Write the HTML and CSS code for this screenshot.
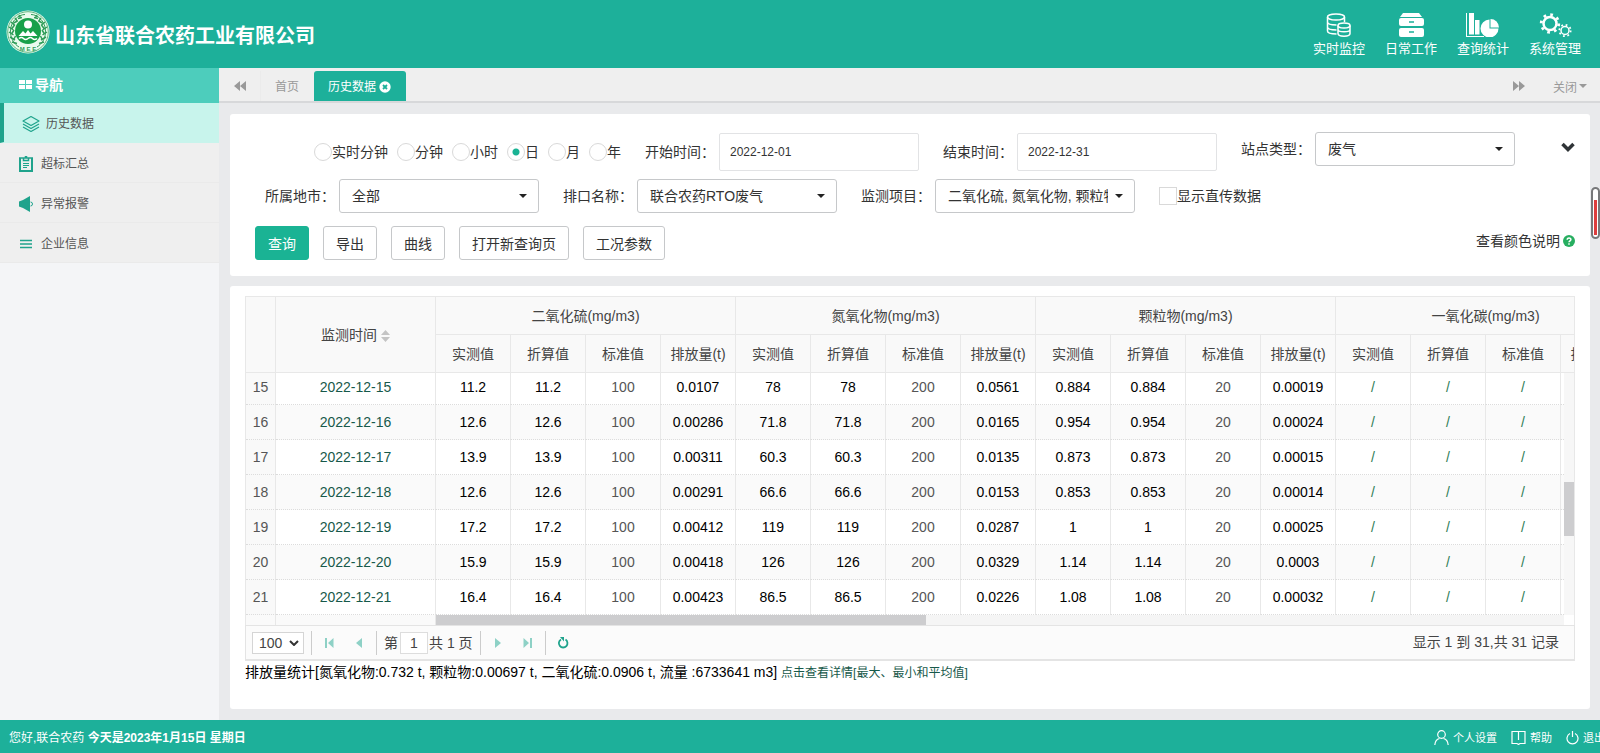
FILE: index.html
```html
<!DOCTYPE html>
<html lang="zh-CN">
<head>
    <meta charset="UTF-8">
    <meta name="viewport" content="width=device-width, initial-scale=1.0">
    <title>历史数据</title>
    <link rel="stylesheet" href="styles.css">
</head>
<body>
    <header class="header">
        <svg class="logo" viewBox="0 0 44 44">
            <circle cx="22" cy="22" r="21.5" fill="#e9fbee"/>
            <circle cx="22" cy="22" r="20.300" fill="none" stroke="#3fa566" stroke-width=".8"/>
            <path d="M13 37C3 31 2 17 9 9.500 12 6 16 4.500 19 4.500M31 37C41 31 42 17 35 9.500 32 6 28 4.500 25 4.500" fill="none" stroke="#2f9c58" stroke-width="1"/>
            <path d="M4 27l5 3M3 22l4.500 3M3 17l4.500 3M5 12l4 3.500M9 8l2.500 3.500M13 5l2 3.500M6 32l5 1.500M9.500 26l-2 4M8 20l-2.500 4M8.500 15l-2.500 3.500M11.500 11l-4 2M16 7.500l-4 1" stroke="#2f9c58" stroke-width="1.500"/>
            <path d="M40 27l-5 3M41 22l-4.500 3M41 17l-4.500 3M39 12l-4 3.500M35 8l-2.500 3.500M31 5l-2 3.500M38 32l-5 1.500M34.500 26l2 4M36 20l2.500 4M35.500 15l2.500 3.500M32.500 11l4 2M28 7.500l4 1" stroke="#2f9c58" stroke-width="1.500"/>
            <circle cx="22" cy="21" r="13" fill="#18a04a"/>
            <circle cx="22" cy="14.500" r="4" fill="#fff"/>
            <path d="M12.500 26l4.500-5 2.500 2.500 2.500-3.500 2.500 3.500 2.500-2.500 4.500 5z" fill="#fff"/>
            <path d="M13 28.500q2.500-2 4.500 0t4.500 0 4.500 0 4.500 0" fill="none" stroke="#fff" stroke-width="1.500"/>
            <text x="22" y="41" text-anchor="middle" class="logo-text">M E E</text>
        </svg>
        <h1 class="company">山东省联合农药工业有限公司</h1>
        <nav class="top-nav">
            <a href="#">
                <svg viewBox="0 0 36 24" fill="none" stroke="#fff" stroke-width="1.5">
                    <ellipse cx="15" cy="4" rx="8.5" ry="3"/>
                    <path d="M6.500 4v14c0 2 4 3 9 3M23.500 4v5M6.500 9c0 2 4 3 9 3M6.500 14c0 2 4 3 9 3"/>
                    <ellipse cx="23" cy="12.500" rx="6" ry="2.500"/>
                    <path d="M17 12.500v8c0 3.500 12 3.500 12 0v-8M17 16.500c0 3 12 3 12 0"/>
                </svg>
                <span>实时监控</span>
            </a>
            <a href="#">
                <svg viewBox="0 0 36 24" fill="#fff">
                    <path d="M10 0h16l3 4H7z"/>
                    <path d="M6 7a2 2 0 0 1 2-2h21a2 2 0 0 1 2 2v4a2 2 0 0 1-2 2H8a2 2 0 0 1-2-2zM6 17a2 2 0 0 1 2-2h21a2 2 0 0 1 2 2v5a2 2 0 0 1-2 2H8a2 2 0 0 1-2-2z"/>
                    <path d="M16 9h5M16 19h5" stroke="#1db09a" stroke-width="1.500"/>
                </svg>
                <span>日常工作</span>
            </a>
            <a href="#">
                <svg viewBox="0 0 36 24" fill="#fff">
                    <path d="M1 0h1v23h17v1H1z"/>
                    <path d="M4 0h5v21.500H4zM10 7h4.500v14.500H10z"/>
                    <path d="M24.500 6.500v9h9a9 9 0 1 1-9-9z"/>
                    <path d="M25.500 6a8.500 8.500 0 0 1 8.500 8.500h-8.500z"/>
                </svg>
                <span>查询统计</span>
            </a>
            <a href="#">
                <svg viewBox="0 0 36 24" fill="none" stroke="#fff">
                    <circle cx="13" cy="10.500" r="6.500" stroke-width="2.500"/>
                    <circle cx="13" cy="10.500" r="8.800" stroke-width="2.800" stroke-dasharray="2.700 4.211"/>
                    <circle cx="28" cy="17.500" r="4" stroke-width="1.500"/>
                    <circle cx="28" cy="17.500" r="5.700" stroke-width="1.700" stroke-dasharray="1.800 2.677"/>
                </svg>
                <span>系统管理</span>
            </a>
        </nav>
    </header>

    <div class="main">
        <aside class="sidebar">
            <div class="side-title">
                <svg width="13" height="10" viewBox="0 0 13 10" fill="#fff"><path d="M0 0h6v4H0zM7 0h6v4H7zM0 5h6v4H0zM7 5h6v4H7z"/></svg>
                <b>导航</b>
            </div>
            <a class="side-item active" href="#">
                <svg width="18" height="18" viewBox="0 0 18 18" fill="none" stroke="#1fa38c" stroke-width="1.2" stroke-linejoin="round"><path d="M9 1.500l8 4.500-8 4.500L1 6zM1 9l8 4.500L17 9M1 12l8 4.500 8-4.500"/></svg>
                历史数据
            </a>
            <a class="side-item" href="#">
                <svg width="14" height="16" viewBox="0 0 14 16" fill="none" stroke="#1fa38c"><path d="M1 2v13h12V2" stroke-width="2"/><path d="M0 2h4M10 2h4M4.500 4.500V2h2V.5h1V2h2v2.500z" stroke-width="1.500"/><path d="M4 7.500h6M4 9.500h6M4 11.500h4" stroke-width="1.200"/></svg>
                超标汇总
            </a>
            <a class="side-item" href="#">
                <svg width="14" height="16" viewBox="0 0 14 16" fill="#1fa38c"><path d="M0 5.500L4 4l7-4v16l-7-4-4-1.500z"/><path d="M11.500 6a2 2 0 0 1 0 4" fill="none" stroke="#1fa38c"/></svg>
                异常报警
            </a>
            <a class="side-item" href="#">
                <svg width="14" height="16" viewBox="0 0 14 16" fill="none" stroke="#1fa38c" stroke-width="1.500"><path d="M1 4.500h12M1 8h12M1 11.500h12"/></svg>
                企业信息
            </a>
        </aside>

        <div class="page">
            <div class="tabs">
                <button class="tab-move" aria-label="向左"><svg width="12" height="10" viewBox="0 0 12 10" fill="#999"><path d="M6 0v10L0 5zM12 0v10L6 5z"/></svg></button>
                <a class="tab" href="#">首页</a>
                <a class="tab tab-active" href="#">历史数据
                    <svg width="12" height="12" viewBox="0 0 12 12"><circle cx="6" cy="6" r="5.700" fill="#fff"/><path d="M4 4l4 4M8 4L4 8" stroke="#1db09a" stroke-width="1.800"/></svg>
                </a>
                <div class="tabs-right">
                    <button class="tab-next" aria-label="向右"><svg width="12" height="10" viewBox="0 0 12 10" fill="#999"><path d="M0 0v10l6-5zM6 0v10l6-5z"/></svg></button>
                    <button class="tab-close">关闭<i class="caret"></i></button>
                </div>
            </div>

            <main class="content">
                <form class="panel search">
                    <div class="form-row row-first">
                        <div class="radios">
                            <label><input type="radio" name="type">实时分钟</label>
                            <label><input type="radio" name="type">分钟</label>
                            <label><input type="radio" name="type">小时</label>
                            <label><input type="radio" name="type" checked>日</label>
                            <label><input type="radio" name="type">月</label>
                            <label><input type="radio" name="type">年</label>
                        </div>
                        <div class="field">
                            <label for="start">开始时间：</label>
                            <input class="date" id="start" type="text" value="2022-12-01">
                        </div>
                        <div class="field">
                            <label for="end">结束时间：</label>
                            <input class="date" id="end" type="text" value="2022-12-31">
                        </div>
                        <div class="field field-top">
                            <label for="site">站点类型：</label>
                            <span class="select"><select id="site"><option>废气</option></select></span>
                        </div>
                        <button type="button" class="fold" aria-label="展开"><svg width="14" height="10" viewBox="0 0 14 10" fill="none" stroke="#2f3437" stroke-width="3.500"><path d="M1.500 2L7 7.500 12.500 2"/></svg></button>
                    </div>
                    <div class="form-row row-second">
                        <div class="field">
                            <label for="city">所属地市：</label>
                            <span class="select"><select id="city"><option>全部</option></select></span>
                        </div>
                        <div class="field">
                            <label for="outlet">排口名称：</label>
                            <span class="select"><select id="outlet"><option>联合农药RTO废气</option></select></span>
                        </div>
                        <div class="field">
                            <label for="item">监测项目：</label>
                            <span class="select"><select id="item"><option>二氧化硫, 氮氧化物, 颗粒物, 一氧化碳</option></select></span>
                        </div>
                        <label class="check"><input type="checkbox">显示直传数据</label>
                    </div>
                    <div class="form-row row-buttons">
                        <button type="button" class="btn btn-primary">查询</button>
                        <button type="button" class="btn">导出</button>
                        <button type="button" class="btn">曲线</button>
                        <button type="button" class="btn">打开新查询页</button>
                        <button type="button" class="btn">工况参数</button>
                        <a class="color-help" href="#">查看颜色说明
                            <svg width="12" height="12" viewBox="0 0 12 12"><circle cx="6" cy="6" r="6" fill="#27ae60"/><path d="M4.200 4.800c0-2.400 3.700-2.300 3.700-.2C7.900 5.800 6 5.800 6 7.300M6 8.300v1.500" fill="none" stroke="#fff" stroke-width="1.500"/></svg>
                        </a>
                    </div>
                </form>

                <section class="panel result">
                    <div class="grid">
                        <table>
                            <colgroup>
                                <col class="col-no"><col class="col-time"><col span="16" class="col-val">
                            </colgroup>
                            <thead>
                                <tr>
                                    <th rowspan="2"></th>
                                    <th rowspan="2">监测时间 <svg width="9" height="12" viewBox="0 0 9 12" fill="#c4c4c4"><path d="M4.500 0L9 5H0zM4.500 12L9 7H0z"/></svg></th>
                                    <th colspan="4">二氧化硫(mg/m3)</th>
                                    <th colspan="4">氮氧化物(mg/m3)</th>
                                    <th colspan="4">颗粒物(mg/m3)</th>
                                    <th colspan="4">一氧化碳(mg/m3)</th>
                                </tr>
                                <tr>
                                    <th>实测值</th><th>折算值</th><th>标准值</th><th>排放量(t)</th>
                                    <th>实测值</th><th>折算值</th><th>标准值</th><th>排放量(t)</th>
                                    <th>实测值</th><th>折算值</th><th>标准值</th><th>排放量(t)</th>
                                    <th>实测值</th><th>折算值</th><th>标准值</th><th>排放量(t)</th>
                                </tr>
                            </thead>
                            <tbody>
                                <tr>
                                    <td class="no">15</td><td class="time">2022-12-15</td>
                                    <td>11.2</td><td>11.2</td><td class="std">100</td><td>0.0107</td>
                                    <td>78</td><td>78</td><td class="std">200</td><td>0.0561</td>
                                    <td>0.884</td><td>0.884</td><td class="std">20</td><td>0.00019</td>
                                    <td class="none">/</td><td class="none">/</td><td class="none">/</td><td></td>
                                </tr>
                                <tr>
                                    <td class="no">16</td><td class="time">2022-12-16</td>
                                    <td>12.6</td><td>12.6</td><td class="std">100</td><td>0.00286</td>
                                    <td>71.8</td><td>71.8</td><td class="std">200</td><td>0.0165</td>
                                    <td>0.954</td><td>0.954</td><td class="std">20</td><td>0.00024</td>
                                    <td class="none">/</td><td class="none">/</td><td class="none">/</td><td></td>
                                </tr>
                                <tr>
                                    <td class="no">17</td><td class="time">2022-12-17</td>
                                    <td>13.9</td><td>13.9</td><td class="std">100</td><td>0.00311</td>
                                    <td>60.3</td><td>60.3</td><td class="std">200</td><td>0.0135</td>
                                    <td>0.873</td><td>0.873</td><td class="std">20</td><td>0.00015</td>
                                    <td class="none">/</td><td class="none">/</td><td class="none">/</td><td></td>
                                </tr>
                                <tr>
                                    <td class="no">18</td><td class="time">2022-12-18</td>
                                    <td>12.6</td><td>12.6</td><td class="std">100</td><td>0.00291</td>
                                    <td>66.6</td><td>66.6</td><td class="std">200</td><td>0.0153</td>
                                    <td>0.853</td><td>0.853</td><td class="std">20</td><td>0.00014</td>
                                    <td class="none">/</td><td class="none">/</td><td class="none">/</td><td></td>
                                </tr>
                                <tr>
                                    <td class="no">19</td><td class="time">2022-12-19</td>
                                    <td>17.2</td><td>17.2</td><td class="std">100</td><td>0.00412</td>
                                    <td>119</td><td>119</td><td class="std">200</td><td>0.0287</td>
                                    <td>1</td><td>1</td><td class="std">20</td><td>0.00025</td>
                                    <td class="none">/</td><td class="none">/</td><td class="none">/</td><td></td>
                                </tr>
                                <tr>
                                    <td class="no">20</td><td class="time">2022-12-20</td>
                                    <td>15.9</td><td>15.9</td><td class="std">100</td><td>0.00418</td>
                                    <td>126</td><td>126</td><td class="std">200</td><td>0.0329</td>
                                    <td>1.14</td><td>1.14</td><td class="std">20</td><td>0.0003</td>
                                    <td class="none">/</td><td class="none">/</td><td class="none">/</td><td></td>
                                </tr>
                                <tr>
                                    <td class="no">21</td><td class="time">2022-12-21</td>
                                    <td>16.4</td><td>16.4</td><td class="std">100</td><td>0.00423</td>
                                    <td>86.5</td><td>86.5</td><td class="std">200</td><td>0.0226</td>
                                    <td>1.08</td><td>1.08</td><td class="std">20</td><td>0.00032</td>
                                    <td class="none">/</td><td class="none">/</td><td class="none">/</td><td></td>
                                </tr>
                            </tbody>
                        </table>
                        <div class="vscroll"><div class="vthumb"></div></div>
                        <div class="hscroll">
                            <div class="frozen-no"></div>
                            <div class="frozen-time"></div>
                            <div class="htrack"><div class="hthumb"></div></div>
                        </div>
                    </div>
                    <div class="pager">
                        <span class="page-size"><select aria-label="每页条数"><option>100</option></select><svg width="10" height="6" viewBox="0 0 10 6" fill="none" stroke="#333" stroke-width="2"><path d="M1 1l4 4 4-4"/></svg></span>
                        <i class="line"></i>
                        <button class="page-btn" aria-label="首页"><svg width="10" height="10" viewBox="0 0 10 10"><path d="M1 0h2v10H1zM9.500 0v10L4 5z"/></svg></button>
                        <button class="page-btn" aria-label="上一页"><svg width="10" height="10" viewBox="0 0 10 10"><path d="M8 0v10L2 5z"/></svg></button>
                        <i class="line"></i>
                        <label class="page-no">第<input type="text" value="1"></label>
                        <span>共 1 页</span>
                        <i class="line"></i>
                        <button class="page-btn" aria-label="下一页"><svg width="10" height="10" viewBox="0 0 10 10"><path d="M2 0v10l6-5z"/></svg></button>
                        <button class="page-btn" aria-label="末页"><svg width="10" height="10" viewBox="0 0 10 10"><path d="M7 0h2v10H7zM.5 0v10L6 5z"/></svg></button>
                        <i class="line"></i>
                        <button class="page-btn refresh" aria-label="刷新"><svg width="12" height="12" viewBox="0 0 12 12"><path d="M8.500 2.600A4.300 4.300 0 1 1 4 2.500" fill="none" stroke="#1fa38c" stroke-width="1.800"/><path d="M3 0h4v4.500z" fill="#1fa38c"/></svg></button>
                        <span class="page-info">显示 1 到 31,共 31 记录</span>
                    </div>
                    <p class="stat">排放量统计[氮氧化物:0.732 t, 颗粒物:0.00697 t, 二氧化硫:0.0906 t, 流量 :6733641 m3] <a href="#">点击查看详情[最大、最小和平均值]</a></p>
                </section>
            </main>
        </div>
    </div>

    <footer class="footer">
        <div>您好,联合农药 <b>今天是2023年1月15日 星期日</b></div>
        <nav class="foot-nav">
            <a href="#"><svg width="15" height="15" viewBox="0 0 15 15"><circle cx="7.500" cy="4.500" r="3.800"/><path d="M.8 15c.3-4 2.600-6 4.700-6.500M14.200 15c-.3-4-2.600-6-4.700-6.500"/></svg>个人设置</a>
            <a href="#"><svg width="15" height="15" viewBox="0 0 15 15"><path d="M1 1.500h13v12H9l-1.500 1-1.500-1H1zM7.500 2v8"/></svg>帮助</a>
            <a href="#"><svg width="13" height="15" viewBox="0 0 13 15"><path d="M4 3.500a5.500 5.500 0 1 0 5 0M6.500 1v6"/></svg>退出</a>
        </nav>
    </footer>

    <div class="gauge"></div>
</body>
</html>
```
FILE: styles.css
```css
* {
    box-sizing: border-box;
}
body {
    margin: 0;
    min-height: 100vh;
    display: flex;
    flex-direction: column;
    position: relative;
    overflow-x: hidden;
    font-family: "Liberation Sans", "Noto Sans CJK SC", sans-serif;
    font-size: 14px;
    line-height: 20px;
    color: #333;
    background: #e9eaec;
}
a {
    color: inherit;
    text-decoration: none;
}
button, input, select {
    font-family: inherit;
    font-size: 14px;
    color: inherit;
}
button {
    padding: 0;
    border: 0;
    background: none;
    cursor: pointer;
}
svg {
    flex-shrink: 0;
}

/* header */
.header {
    display: flex;
    align-items: center;
    height: 68px;
    padding: 0 19px 0 6px;
    background: #1db09a;
    color: #fff;
}
.logo {
    width: 44px;
    height: 44px;
    margin-bottom: 4px;
}
.logo-text {
    font-size: 6px;
    font-weight: bold;
    fill: #2f9c58;
}
.company {
    margin: 0 0 0 5px;
    padding-top: 3px;
    font-size: 20px;
    line-height: 28px;
}
.top-nav {
    display: flex;
    gap: 20px;
    margin-left: auto;
    padding-top: 2px;
    font-size: 13px;
    line-height: 18px;
}
.top-nav a {
    display: flex;
    flex-direction: column;
    align-items: center;
    gap: 3px;
}
.top-nav svg {
    width: 36px;
    height: 24px;
}

/* sidebar */
.main {
    flex: 1;
    display: flex;
}
.sidebar {
    width: 219px;
    flex-shrink: 0;
    background: #f4f5f7;
    font-size: 12px;
}
.side-title {
    display: flex;
    align-items: center;
    gap: 3px;
    height: 35px;
    padding: 0 19px 2px;
    background: #4dcdbc;
    color: #fff;
    font-size: 14px;
}
.side-item {
    display: flex;
    align-items: center;
    gap: 8px;
    height: 40px;
    padding: 2px 0 0 19px;
    background: #efefef;
    border-bottom: 1px solid #eaeaea;
    color: #555;
}
.side-item.active {
    gap: 6px;
    padding-left: 18px;
    border-left: 4px solid #1fa38c;
    border-bottom-color: #c8f4ec;
    background: #c8f4ec;
}

/* tabs */
.page {
    flex: 1;
    min-width: 0;
    display: flex;
    flex-direction: column;
}
.tabs {
    display: flex;
    align-items: flex-end;
    height: 35px;
    padding-right: 13px;
    background: #efefef;
    border-bottom: 2px solid #d7d8da;
    color: #999;
    font-size: 12px;
}
.tab-move {
    width: 42px;
    height: 30px;
    border-right: 1px solid #ebebeb;
}
.tab {
    display: flex;
    align-items: center;
    gap: 3px;
    height: 30px;
    padding: 1px 15px 0 14px;
}
.tab-active {
    border-radius: 3px 3px 0 0;
    background: #1db09a;
    color: #fff;
}
.tabs-right {
    display: flex;
    gap: 28px;
    height: 30px;
    margin-left: auto;
}
.tab-close {
    display: flex;
    align-items: center;
    gap: 2px;
    font-size: 12px;
}
.caret {
    border: 4px solid transparent;
    border-top-color: #999;
    border-bottom: 0;
}

/* search form */
.content {
    flex: 1;
    display: flex;
    flex-direction: column;
    gap: 10px;
    padding: 11px 10px 11px 11px;
}
.panel {
    background: #fff;
    border-radius: 3px;
}
.search {
    padding: 18px 15px 16px 25px;
}
.form-row {
    display: flex;
    align-items: center;
    gap: 24px;
}
.row-first {
    height: 40px;
    padding-left: 59px;
}
.row-second {
    margin-top: 7px;
    padding-left: 10px;
}
.row-buttons {
    gap: 14px;
    margin-top: 13px;
}
.radios {
    display: flex;
    gap: 9px;
}
.radios label, .check {
    display: flex;
    align-items: center;
}
.radios input, .check input {
    appearance: none;
    width: 18px;
    height: 18px;
    margin: 0;
    border: 1px solid #d9d9d9;
    background: #fff;
}
.radios input {
    border-radius: 50%;
}
.radios input:checked {
    background: radial-gradient(#1ab394 3px, #fff 4px);
}
.field {
    display: flex;
    align-items: center;
}
.field label {
    width: 74px;
}
.field-top {
    align-self: flex-start;
}
.date {
    width: 200px;
    height: 38px;
    padding: 0 10px;
    border: 1px solid #e2e3e5;
    border-radius: 2px;
    font-size: 12px;
}
.select {
    position: relative;
}
.select select {
    appearance: none;
    display: block;
    width: 200px;
    height: 34px;
    padding: 0 26px 0 12px;
    border: 1px solid #c6c8ca;
    border-radius: 3px;
    background: #fff;
}
.select::after {
    content: "";
    position: absolute;
    top: 15px;
    right: 12px;
    border: 4px solid transparent;
    border-top-color: #222;
    border-bottom: 0;
    pointer-events: none;
}
.fold {
    align-self: flex-start;
    height: 30px;
    margin-left: auto;
}
.btn {
    height: 34px;
    padding: 0 12px;
    border: 1px solid #c6c8ca;
    border-radius: 3px;
    background: #fff;
}
.btn-primary {
    border-color: #1ab394;
    background: #1ab394;
    color: #fff;
}
.color-help {
    display: flex;
    align-items: center;
    gap: 3px;
    margin-left: auto;
    padding-bottom: 4px;
}

/* table */
.result {
    flex: 1;
    padding: 10px 15px;
}
.grid {
    position: relative;
    overflow: hidden;
    border: 1px solid #e8e8e8;
    border-bottom: 0;
}
table {
    width: 1390px;
    table-layout: fixed;
    border-collapse: separate;
    border-spacing: 0;
    text-align: center;
}
.col-no {
    width: 30px;
}
.col-time {
    width: 160px;
}
.col-val {
    width: 75px;
}
th, td {
    padding: 0;
    border-right: 1px solid #e8e8e8;
    border-bottom: 1px dotted #dcdcdc;
}
th {
    height: 38px;
    border-bottom: 1px solid #e8e8e8;
    background: #f9f9f9;
    color: #444;
    font-weight: normal;
}
th svg {
    vertical-align: -2px;
}
td {
    height: 35px;
    color: #000;
}
/* the first visible row is partly scrolled under the head */
tbody tr:first-child td {
    height: 32px;
    padding-bottom: 3px;
}
tbody tr:nth-child(even) {
    background: #fafafa;
}
.no {
    background: #f9f9f9;
    color: #555;
}
.time {
    color: #17594a;
}
.std {
    color: #555;
}
.none {
    color: #2f7d55;
}
.vscroll {
    position: absolute;
    top: 76px;
    right: 0;
    bottom: 10px;
    width: 10px;
    padding-top: 109px;
    background: #f7f7f7;
}
.vthumb {
    height: 54px;
    background: #cdcdcf;
}
.hscroll {
    display: flex;
    height: 10px;
    padding-right: 10px;
}
.frozen-no, .frozen-time {
    width: 30px;
    border-right: 1px solid #e8e8e8;
    background: #fafafa;
}
.frozen-time {
    width: 160px;
}
.htrack {
    flex: 1;
    background: #f5f5f5;
}
.hthumb {
    width: 43.4%;
    height: 10px;
    background: #cdcdcf;
}

/* pager */
.pager {
    display: flex;
    align-items: center;
    height: 36px;
    padding: 0 15px 0 6px;
    border: 1px solid #e4e4e4;
    border-bottom-width: 2px;
    background: #fbfbfb;
    color: #444;
}
.page-size {
    display: flex;
    align-items: center;
    position: relative;
}
.page-size select {
    appearance: none;
    width: 52px;
    height: 22px;
    padding: 0 6px;
    border: 1px solid #d5d5d5;
    background: #fff;
}
.page-size svg {
    position: absolute;
    right: 5px;
    pointer-events: none;
}
.line {
    width: 1px;
    height: 24px;
    margin: 0 7px;
    background: #ccc;
}
.page-btn {
    display: flex;
    align-items: center;
    justify-content: center;
    width: 20px;
    height: 24px;
    fill: #8ed1c6;
}
.page-btn + .page-btn {
    margin-left: 10px;
}
.page-no {
    display: flex;
    align-items: center;
    gap: 2px;
    margin-right: 1px;
}
.page-no input {
    width: 28px;
    height: 22px;
    padding: 0;
    border: 1px solid #ddd;
    text-align: center;
}
.page-info {
    margin-left: auto;
    padding-bottom: 2px;
}
.stat {
    margin: 1px 0 0;
    color: #000;
}
.stat a {
    color: #17594a;
    font-size: 12px;
}

/* footer */
.footer {
    display: flex;
    align-items: center;
    justify-content: space-between;
    height: 33px;
    padding: 2px 0 0 9px;
    overflow: hidden;
    background: #1db09a;
    color: #fff;
    font-size: 12px;
}
.foot-nav {
    display: flex;
    gap: 14px;
    margin-right: -5px;
    font-size: 11px;
}
.foot-nav a {
    display: flex;
    align-items: center;
    gap: 4px;
}
.foot-nav svg {
    fill: none;
    stroke: #fff;
    stroke-width: 1.2;
}

/* floating marker at the window edge */
.gauge {
    position: absolute;
    top: 187px;
    right: 0;
    width: 9px;
    height: 52px;
    border: 2px solid #77787a;
    border-radius: 5px;
    background: linear-gradient(#fff 20%, #dd3e3e 20%) center / 3px 44px no-repeat #fff;
}
```
